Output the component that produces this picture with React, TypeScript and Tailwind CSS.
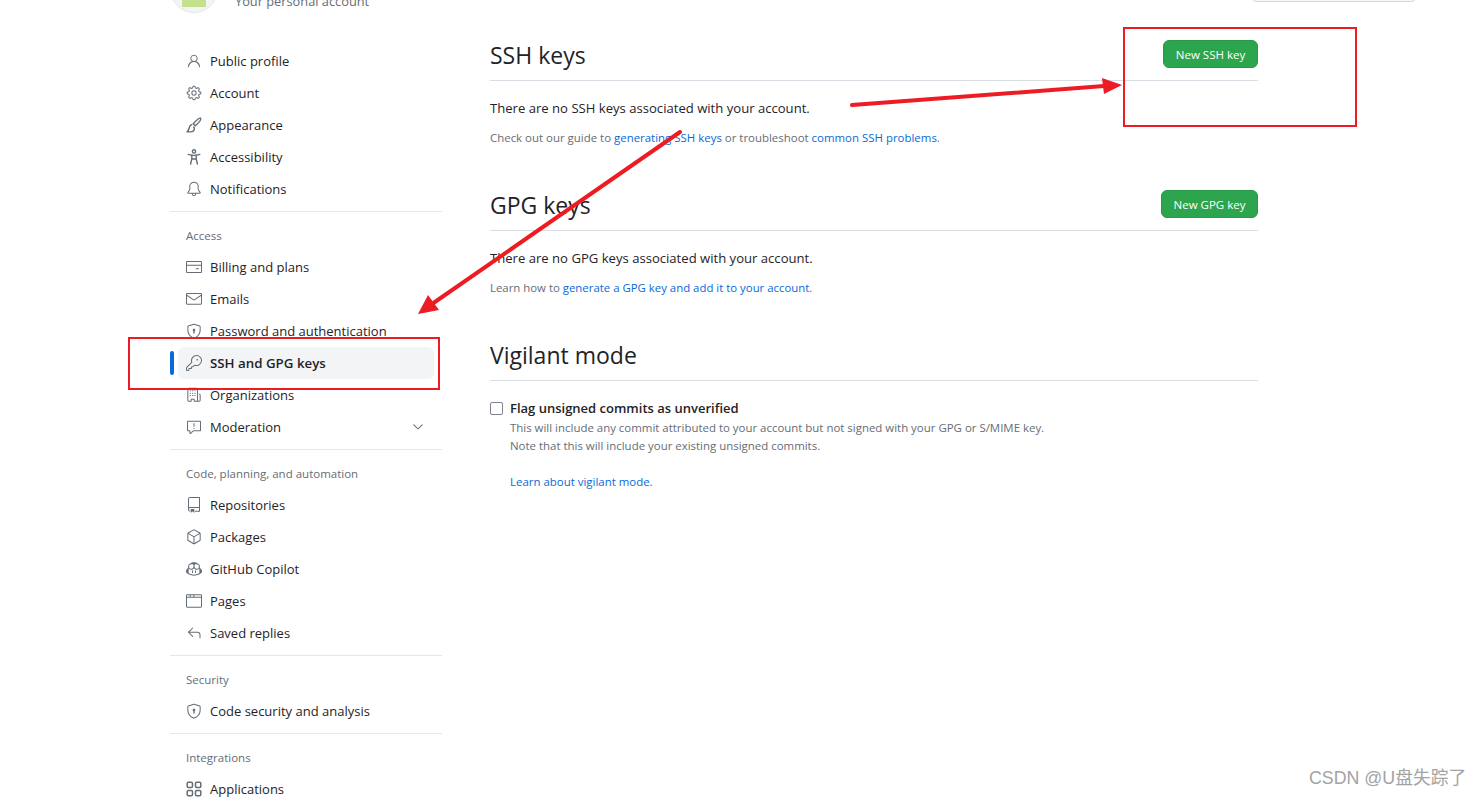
import type { ComponentType, ReactNode } from "react";
import {
  GoBell,
  GoBrowser,
  GoChevronDown,
  GoCopilot,
  GoCreditCard,
  GoGear,
  GoKey,
  GoMail,
  GoOrganization,
  GoPackage,
  GoPerson,
  GoRepo,
  GoReply,
  GoReport,
  GoShieldLock,
} from "react-icons/go";

type IconProps = { className?: string };
type Item = { label: string; icon: ComponentType<IconProps>; active?: boolean; chevron?: boolean };

function BrushIcon({ className }: IconProps) {
  return (
    <svg className={className} viewBox="0 0 16 16" fill="none" stroke="currentColor" strokeWidth="1.4" strokeLinejoin="round">
      <path d="M14.6 1.2c-1-.6-3.6 1.3-7.4 5.6l2 2c4.3-3.8 6-6.6 5.4-7.6Z" />
      <path d="M6.2 7.6C4 7.6 3.6 9 3.2 11c-.3 1.4-1 2.8-2.2 3.9h3.3c2.6 0 4-1 4-3.1 0-1-.3-1.6-.9-2.3" />
    </svg>
  );
}

function PersonArmsIcon({ className }: IconProps) {
  return (
    <svg className={className} viewBox="0 0 16 16" fill="none" stroke="currentColor" strokeWidth="1.4" strokeLinecap="round" strokeLinejoin="round">
      <circle cx="8" cy="2.4" r="1.6" />
      <path d="M2.2 5.4c3.6 1.2 8 1.2 11.6 0" />
      <path d="M5.8 6.2v3.6L4.6 15M10.2 6.2v3.6l1.2 5.2M5.8 10h4.4" />
    </svg>
  );
}

function AppsIcon({ className }: IconProps) {
  return (
    <svg className={className} viewBox="0 0 16 16" fill="none" stroke="currentColor" strokeWidth="1.5">
      <rect x="1.2" y="1.2" width="5.3" height="5.3" rx="1.2" />
      <rect x="9.5" y="1.2" width="5.3" height="5.3" rx="1.2" />
      <rect x="1.2" y="9.5" width="5.3" height="5.3" rx="1.2" />
      <rect x="9.5" y="9.5" width="5.3" height="5.3" rx="1.2" />
    </svg>
  );
}

const personal: Item[] = [
  { label: "Public profile", icon: GoPerson },
  { label: "Account", icon: GoGear },
  { label: "Appearance", icon: BrushIcon },
  { label: "Accessibility", icon: PersonArmsIcon },
  { label: "Notifications", icon: GoBell },
];

const access: Item[] = [
  { label: "Billing and plans", icon: GoCreditCard },
  { label: "Emails", icon: GoMail },
  { label: "Password and authentication", icon: GoShieldLock },
  { label: "SSH and GPG keys", icon: GoKey, active: true },
  { label: "Organizations", icon: GoOrganization },
  { label: "Moderation", icon: GoReport, chevron: true },
];

const code: Item[] = [
  { label: "Repositories", icon: GoRepo },
  { label: "Packages", icon: GoPackage },
  { label: "GitHub Copilot", icon: GoCopilot },
  { label: "Pages", icon: GoBrowser },
  { label: "Saved replies", icon: GoReply },
];

function NavRow({ item }: { item: Item }) {
  const Icon = item.icon;
  return (
    <div className="relative mx-2 flex h-8 items-center">
      {item.active && <span className="absolute -left-2 top-1 h-6 w-1 rounded-full bg-[#0969da]" />}
      <div className={`flex h-8 w-full items-center rounded-md px-2 text-[#1f2328] ${item.active ? "bg-[#f3f4f6] font-semibold" : ""}`}>
        <Icon className="mr-2 h-4 w-4 shrink-0 text-[#656d76]" />
        <span className={`pt-px ${item.active ? "text-[13.3px]" : "text-[13px]"}`}>{item.label}</span>
        {item.chevron && <GoChevronDown className="ml-auto h-4 w-4 text-[#656d76]" />}
      </div>
    </div>
  );
}

function NavGroup({ title, items, last }: { title?: string; items: Item[]; last?: boolean }) {
  return (
    <div className={last ? "" : "mb-[6px] border-b border-[#e5e7eb] pb-[6px]"}>
      {title && <div className="flex h-[33px] items-center px-4 pt-[3px] text-[11.5px] font-medium text-[#656d76]">{title}</div>}
      {items.map((item) => (
        <NavRow key={item.label} item={item} />
      ))}
    </div>
  );
}

function SectionHead({ title, action, actionWidth }: { title: string; action?: string; actionWidth?: string }) {
  return (
    <div className="flex h-[41px] items-start justify-between border-b border-[#d8dee4]">
      <h2 className="text-[23px] font-normal leading-[30px] text-[#1f2328]">{title}</h2>
      {action && (
        <button className={`h-7 rounded-md border border-[#2c974b] bg-[#2da44e] pt-px text-center text-[11.5px] text-white ${actionWidth}`}>
          {action}
        </button>
      )}
    </div>
  );
}

function A({ children }: { children: ReactNode }) {
  return <a className="text-[#0969da]">{children}</a>;
}

export default function App() {
  return (
    <div className="relative h-[797px] w-full overflow-hidden bg-white font-['Open_Sans','Noto_Sans',sans-serif]">
      <div className="mt-[-35px] flex h-12 items-center pl-[170px]">
        <div className="relative h-12 w-12 overflow-hidden rounded-full border border-[#e5e7eb] bg-[#f2f5f3]">
          <div className="absolute bottom-[5px] left-[11px] h-6 w-6 bg-[#c4e18e]" />
        </div>
        <div className="ml-[17px] mt-[24px] text-[12.8px] leading-[24px] text-[#656d76]">Your personal account</div>
        <div className="ml-auto mr-[64px] mt-[-11px] h-[37px] w-[166px] rounded-md border border-[#d0d7de] bg-[#f6f8fa]" />
      </div>

      <div className="flex items-start pl-[170px] pt-[32px]">
        <aside className="w-[272px] shrink-0">
          <NavGroup items={personal} />
          <NavGroup title="Access" items={access} />
          <NavGroup title="Code, planning, and automation" items={code} />
          <NavGroup title="Security" items={[{ label: "Code security and analysis", icon: GoShieldLock }]} />
          <NavGroup title="Integrations" items={[{ label: "Applications", icon: AppsIcon }]} last />
        </aside>

        <main className="ml-[48px] mt-[-5px] w-[768px]">
          <SectionHead title="SSH keys" action="New SSH key" actionWidth="w-[95px]" />
          <p className="mt-[16px] text-[13.1px] leading-[22px] text-[#1f2328]">There are no SSH keys associated with your account.</p>
          <p className="mt-[9px] text-[11.45px] leading-[20px] text-[#656d76]">
            Check out our guide to <A>generating SSH keys</A> or troubleshoot <A>common SSH problems</A>.
          </p>

          <div className="mt-[42px]">
            <SectionHead title="GPG keys" action="New GPG key" actionWidth="w-[97px]" />
          </div>
          <p className="mt-[16px] text-[13.1px] leading-[22px] text-[#1f2328]">There are no GPG keys associated with your account.</p>
          <p className="mt-[9px] text-[11.4px] leading-[20px] text-[#656d76]">
            Learn how to <A>generate a GPG key and add it to your account</A>.
          </p>

          <div className="mt-[42px]">
            <SectionHead title="Vigilant mode" />
          </div>
          <div className="mt-[17px] flex">
            <span className="mt-[4px] h-[13px] w-[13px] shrink-0 rounded-[2px] border-[1.5px] border-[#80808a] bg-white" />
            <div className="ml-[7px]">
              <div className="text-[13px] font-semibold leading-[21px] text-[#1f2328]">Flag unsigned commits as unverified</div>
              <p className="text-[11.45px] leading-[18px] text-[#656d76]">
                This will include any commit attributed to your account but not signed with your GPG or S/MIME key.
              </p>
              <p className="text-[11.45px] leading-[18px] text-[#656d76]">Note that this will include your existing unsigned commits.</p>
              <p className="mt-[18px] text-[11.45px] leading-[18px]"><A>Learn about vigilant mode.</A></p>
            </div>
          </div>
        </main>
      </div>

      {/* annotations drawn on top of the screenshot */}
      <div className="absolute left-[1123px] top-[27px] h-[100px] w-[234px] border-2 border-[#ed1c24]" />
      <div className="absolute left-[128px] top-[337px] h-[53px] w-[312px] border-2 border-[#ed1c24]" />
      <svg className="absolute left-0 top-0 h-[797px] w-[1481px]" viewBox="0 0 1481 797" fill="none">
        <path d="M852 105 L1104 86" stroke="#ed1c24" strokeWidth="4" strokeLinecap="round" />
        <path d="M1122 85 L1102 78 L1104 94 Z" fill="#ed1c24" />
        <path d="M680 132 L432 304" stroke="#ed1c24" strokeWidth="4" strokeLinecap="round" />
        <path d="M418 314 L428 295 L439 310 Z" fill="#ed1c24" />
      </svg>
      <div className="absolute left-[1309px] top-[766px] font-['Liberation_Sans','Noto_Sans_CJK_SC',sans-serif] text-[17.8px] leading-[24px] text-[#a3a3a3]">
        CSDN @U盘失踪了
      </div>
    </div>
  );
}
